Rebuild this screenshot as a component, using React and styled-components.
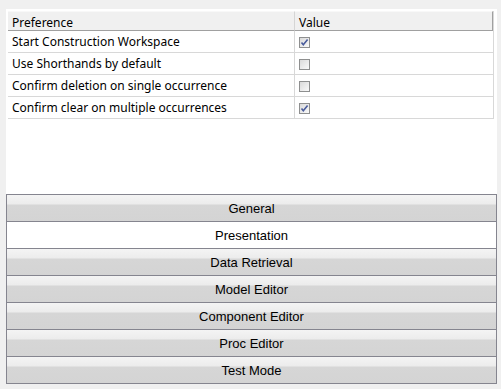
import styled, { createGlobalStyle } from "styled-components";

const GlobalStyle = createGlobalStyle`
  html, body {
    margin: 0;
    padding: 0;
    background: #f0f0f0;
  }
`;

const Page = styled.div`
  width: 501px;
  height: 389px;
  padding: 9px 4px 0 6px;
  box-sizing: border-box;
  display: flex;
  flex-direction: column;
`;

const Panel = styled.div`
  background: #fff;
  height: 185px;
  padding: 2px 3px 0 2px;
  box-sizing: border-box;
`;

const Table = styled.div`
  display: grid;
  grid-template-columns: 287px 1fr;
  border-right: 1px solid #d8d8d8;
  font-family: "Noto Sans", "Open Sans", sans-serif;
  font-size: 12px;
  color: #000;
`;

const HeadCell = styled.div`
  height: 18px;
  line-height: 22px;
  padding-left: 4px;
  background: #f0f0f0;
  border-top: 1px solid #f8f8f8;
  border-bottom: 1px solid #a0a0a0;
  border-right: 1px solid ${(p) => (p.$last ? "#a0a0a0" : "#d5d5d5")};
  overflow: hidden;
  white-space: nowrap;
`;

const Cell = styled.div`
  height: 21px;
  line-height: 21px;
  padding-left: 4px;
  border-bottom: 1px solid #d8d8d8;
  border-right: ${(p) => (p.$first ? "1px solid #d8d8d8" : "none")};
  display: flex;
  align-items: center;
  white-space: nowrap;
`;

const Box = styled.svg`
  display: block;
  margin-top: 1px;
`;

const Tabs = styled.div`
  display: flex;
  flex-direction: column;
  width: 491px;
`;

const Tab = styled.div`
  height: ${(p) => (p.$open ? "27px" : "28px")};
  box-sizing: border-box;
  border: 1px solid #85858f;
  border-bottom: ${(p) => (p.$open ? "none" : "1px solid #85858f")};
  margin-top: ${(p) => (p.$gap ? "0" : "-1px")};
  background: ${(p) =>
    p.$open
      ? "#fff"
      : "linear-gradient(#f4f4f4 0, #ececec 9px, #d6d6d6 10px, #d4d4d4 100%)"};
  font-family: "Liberation Sans", Arial, sans-serif;
  font-size: 13px;
  color: #000;
  display: flex;
  align-items: center;
  justify-content: center;
  &:first-child {
    margin-top: 0;
  }
`;

const Check = ({ on }) => (
  <Box width="11" height="11" viewBox="0 0 11 11">
    <defs>
      <linearGradient id="cbg" x1="0" y1="0" x2="1" y2="1">
        <stop offset="0" stopColor="#d8d8d8" />
        <stop offset="1" stopColor="#fbfbfb" />
      </linearGradient>
    </defs>
    <rect x="0.5" y="0.5" width="10" height="10" fill="url(#cbg)" stroke="#8e8f8f" />
    {on && (
      <path d="M2.5 5.5 L4.3 7.8 L8.6 2.5" fill="none" stroke="#4a5c9c" strokeWidth="1.6" />
    )}
  </Box>
);

const prefs = [
  ["Start Construction Workspace", true],
  ["Use Shorthands by default", false],
  ["Confirm deletion on single occurrence", false],
  ["Confirm clear on multiple occurrences", true],
];

const tabs = [
  "General",
  "Presentation",
  "Data Retrieval",
  "Model Editor",
  "Component Editor",
  "Proc Editor",
  "Test Mode",
];

export default function App() {
  return (
    <Page>
      <GlobalStyle />
      <Panel>
        <Table>
          <HeadCell>Preference</HeadCell>
          <HeadCell $last>Value</HeadCell>
          {prefs.map(([name, on]) => [
            <Cell key={name} $first>
              {name}
            </Cell>,
            <Cell key={name + "v"}>
              <Check on={on} />
            </Cell>,
          ])}
        </Table>
      </Panel>
      <Tabs>
        {tabs.map((t, i) => (
          <Tab key={t} $open={i === 1} $gap={i === 2}>
            {t}
          </Tab>
        ))}
      </Tabs>
    </Page>
  );
}
